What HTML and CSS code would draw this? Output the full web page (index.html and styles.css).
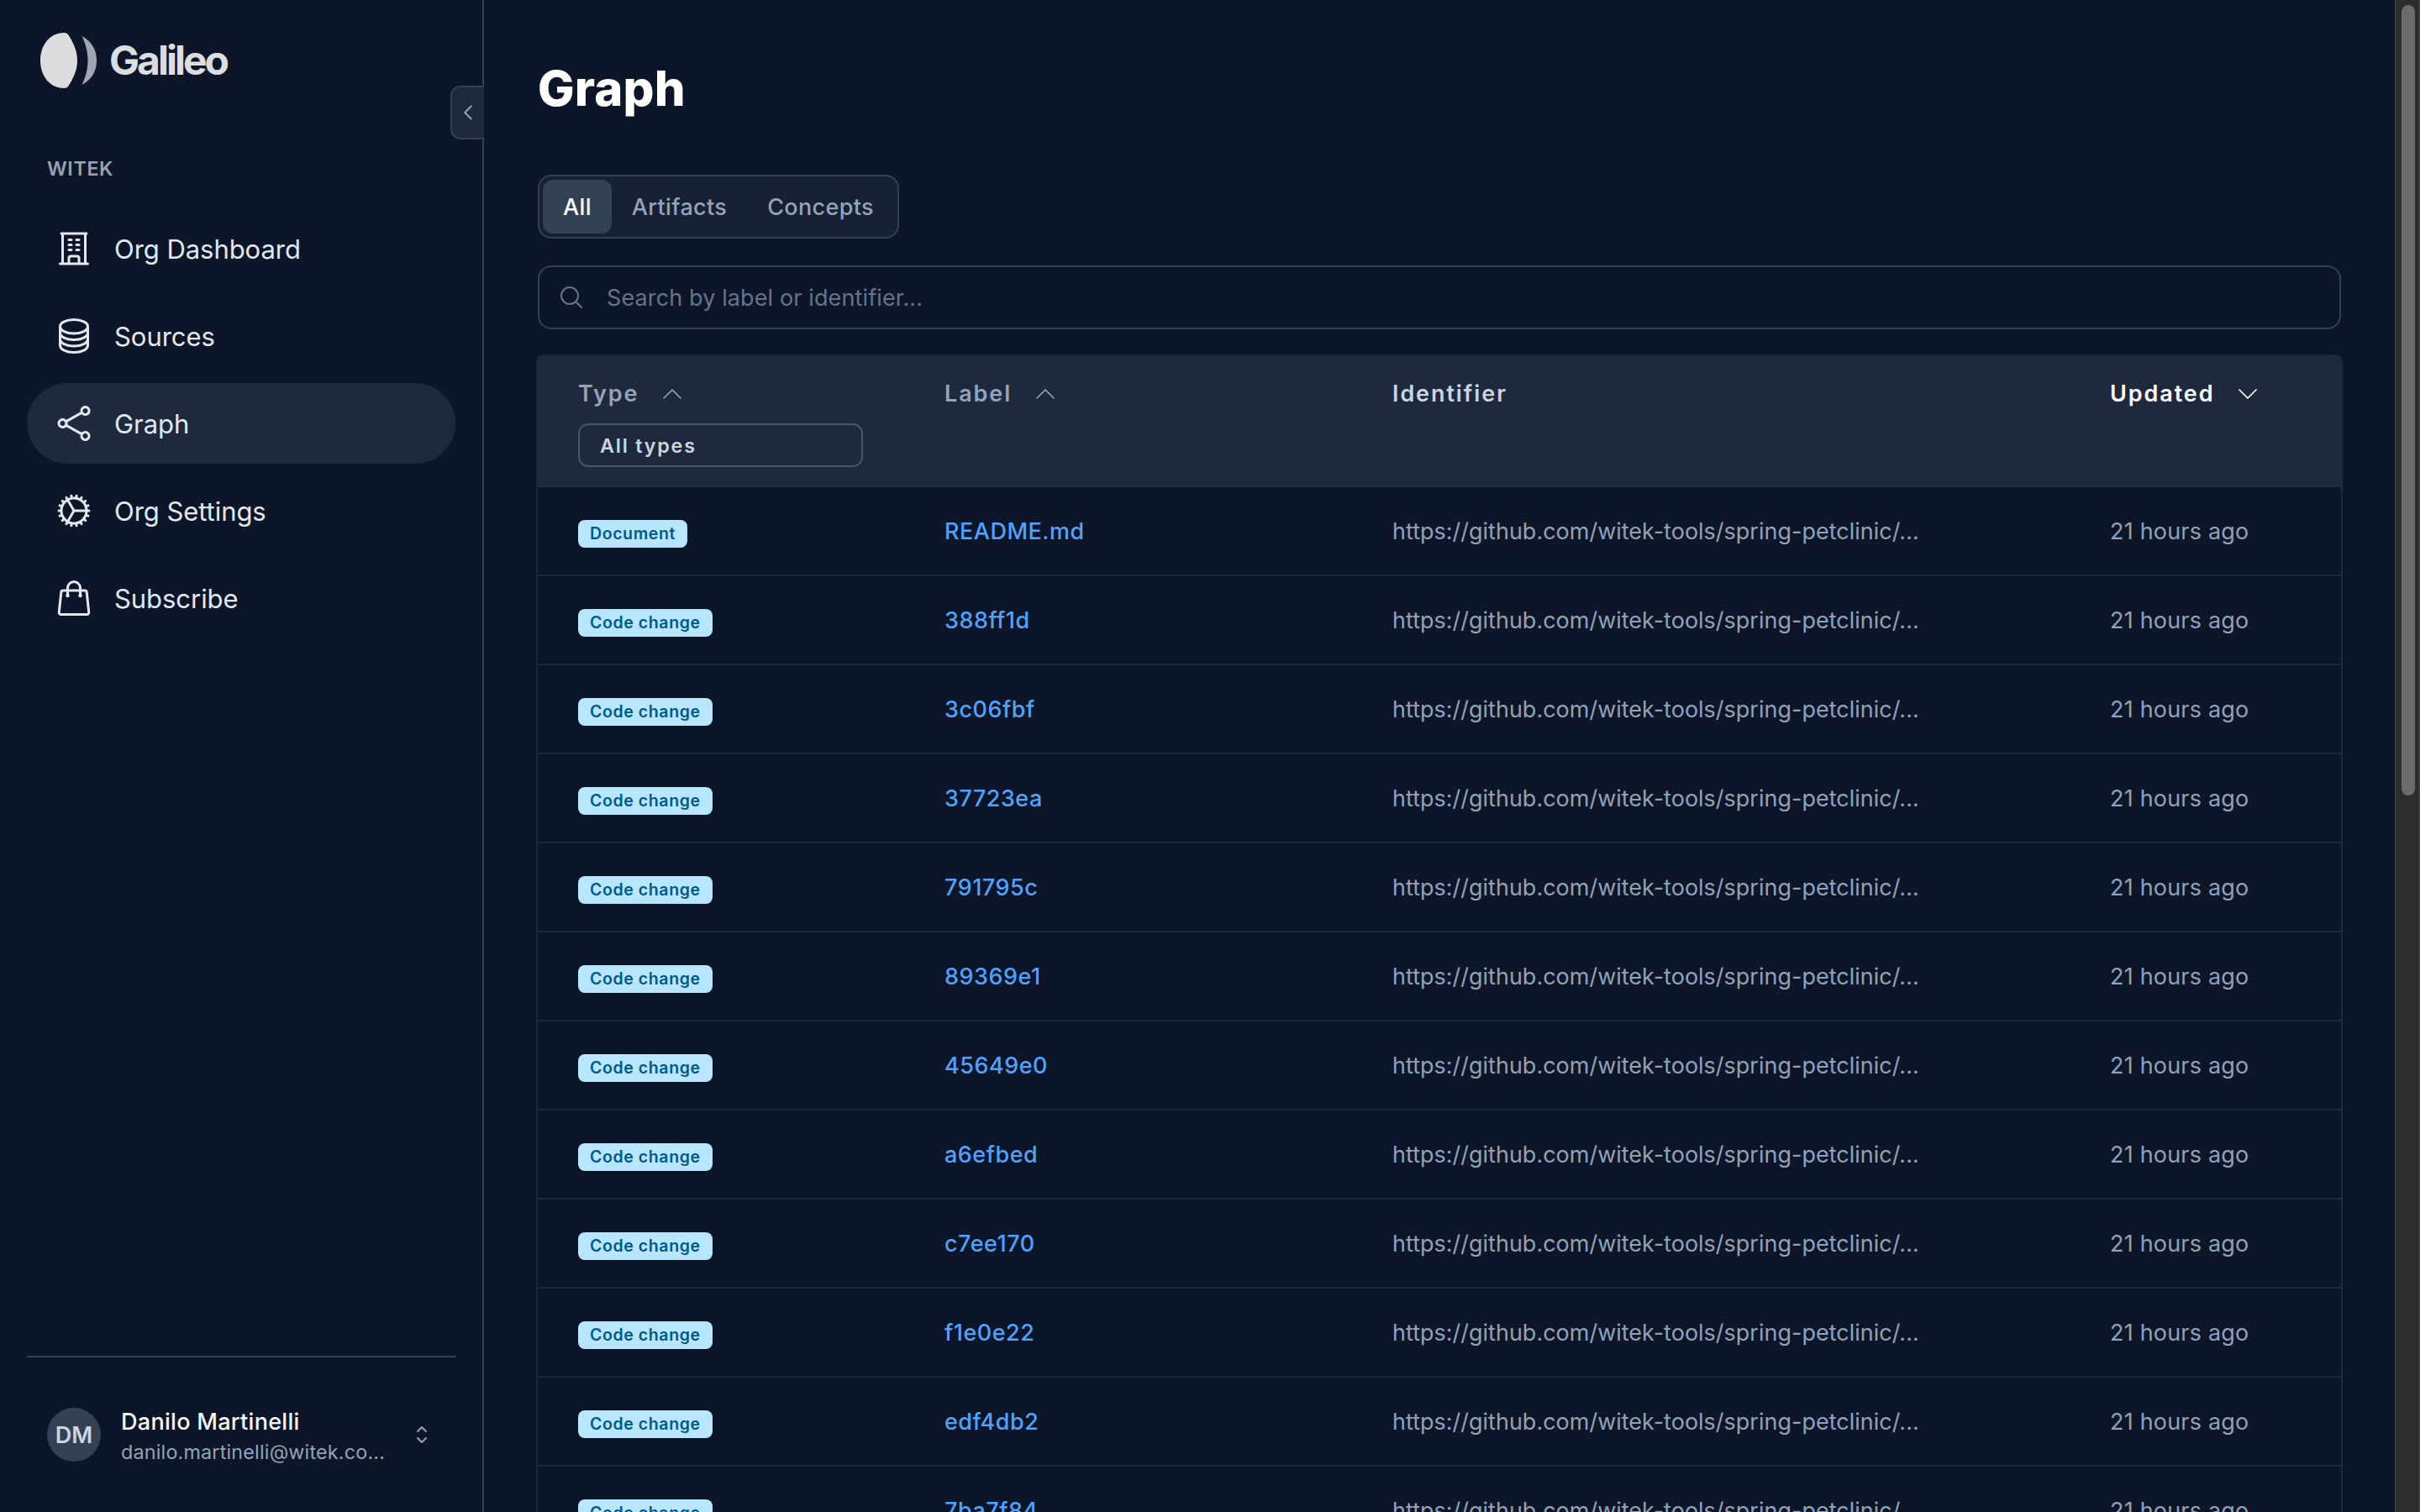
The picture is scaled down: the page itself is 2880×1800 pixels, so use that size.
FILE: index.html
```html
<!DOCTYPE html>
<html lang="en">
<head>
    <meta charset="UTF-8">
    <meta name="viewport" content="width=device-width, initial-scale=1.0">
    <title>Graph - Galileo</title>
    <link rel="stylesheet" href="styles.css">
</head>
<body>
    <div class="app">
        <aside class="sidebar">
            <div class="logo">
                <svg class="logo-mark" viewBox="0 0 68 66">
                    <path fill="#dbdddf" d="M28 0C12 0 0 14 0 33s12 33 28 33c3 0 4.500-1 6-3.500C40.500 52 44 43 44 33S40.500 14 34 3.500C32.500 1 31 0 28 0Z"/>
                    <path fill="#a0a5b4" d="M49.500 4C61 10 67 20 67 33S61 56 49.500 62C54 53 56.500 43 56.500 33S54 13 49.500 4Z"/>
                </svg>
                <span class="logo-text">Galileo</span>
            </div>
            <button class="collapse">
                <svg class="icon" viewBox="0 0 24 24"><path d="M15.750 19.500 8.250 12l7.500-7.500"/></svg>
            </button>

            <div class="org-name">WITEK</div>
            <nav class="nav">
                <a class="nav-item">
                    <svg class="icon" viewBox="0 0 24 24"><path d="M3.750 21h16.500M4.500 3h15M5.250 3v18m13.500-18v18M9 6.750h1.500m-1.500 3h1.500m-1.500 3h1.500m3-6H15m-1.500 3H15m-1.500 3H15M9 21v-3.375c0-.621.504-1.125 1.125-1.125h3.750c.621 0 1.125.504 1.125 1.125V21"/></svg>
                    <span>Org Dashboard</span>
                </a>
                <a class="nav-item">
                    <svg class="icon" viewBox="0 0 24 24"><path d="M20.250 6.375c0 2.278-3.694 4.125-8.250 4.125S3.750 8.653 3.750 6.375m16.500 0c0-2.278-3.694-4.125-8.250-4.125S3.750 4.097 3.750 6.375m16.500 0v11.250c0 2.278-3.694 4.125-8.250 4.125s-8.250-1.847-8.250-4.125V6.375m16.500 0v3.750m-16.500-3.750v3.750m16.500 0v3.750C20.250 16.153 16.556 18 12 18s-8.250-1.847-8.250-4.125v-3.750m16.500 0c0 2.278-3.694 4.125-8.250 4.125s-8.250-1.847-8.250-4.125"/></svg>
                    <span>Sources</span>
                </a>
                <a class="nav-item active">
                    <svg class="icon" viewBox="0 0 24 24"><path d="M7.217 10.907a2.250 2.250 0 1 0 0 2.186m0-2.186c.18.324.283.696.283 1.093s-.103.77-.283 1.093m0-2.186 9.566-5.314m-9.566 7.500 9.566 5.314m0 0a2.250 2.250 0 1 0 3.935 2.186 2.250 2.250 0 0 0-3.935-2.186Zm0-12.814a2.250 2.250 0 1 0 3.933-2.185 2.250 2.250 0 0 0-3.933 2.185Z"/></svg>
                    <span>Graph</span>
                </a>
                <a class="nav-item">
                    <svg class="icon" viewBox="0 0 24 24"><path d="M4.500 12a7.500 7.500 0 0 0 15 0m-15 0a7.500 7.500 0 1 1 15 0m-15 0H3m16.500 0H21m-1.500 0H12m-8.457 3.077 1.410-.513m14.095-5.130 1.410-.513M5.106 17.785l1.150-.964m11.490-9.642 1.149-.964M7.501 19.795l.75-1.300m7.500-12.990.75-1.300m-6.063 16.658.26-1.477m2.605-14.772.26-1.477m0 17.726-.26-1.477M10.698 4.614l-.26-1.477M16.500 19.794l-.75-1.299M7.500 4.205 12 12m6.894 5.785-1.149-.964M6.256 7.178l-1.150-.964m15.352 8.864-1.410-.513M4.954 9.435l-1.410-.514M12.002 12l-3.750 6.495"/></svg>
                    <span>Org Settings</span>
                </a>
                <a class="nav-item">
                    <svg class="icon" viewBox="0 0 24 24"><path d="M15.750 10.500V6a3.750 3.750 0 1 0-7.500 0v4.500m11.356-1.993 1.263 12c.07.665-.45 1.243-1.119 1.243H4.250a1.125 1.125 0 0 1-1.120-1.243l1.264-12A1.125 1.125 0 0 1 5.513 7.500h12.974c.576 0 1.059.435 1.119 1.007ZM8.625 10.500a.375.375 0 1 1-.75 0 .375.375 0 0 1 .75 0Zm7.500 0a.375.375 0 1 1-.75 0 .375.375 0 0 1 .75 0Z"/></svg>
                    <span>Subscribe</span>
                </a>
            </nav>

            <div class="user">
                <div class="avatar">DM</div>
                <div class="user-info">
                    <div class="user-name">Danilo Martinelli</div>
                    <div class="user-email">danilo.martinelli@witek.co...</div>
                </div>
                <svg class="icon" viewBox="0 0 24 24"><path d="M8.250 15 12 18.750 15.750 15m-7.500-6L12 5.250 15.750 9"/></svg>
            </div>
        </aside>

        <main class="main">
            <h1>Graph</h1>
            <div class="tabs">
                <button class="tab active">All</button>
                <button class="tab">Artifacts</button>
                <button class="tab">Concepts</button>
            </div>
            <div class="search">
                <svg class="icon" viewBox="0 0 24 24"><path d="m21 21-5.197-5.197m0 0A7.500 7.500 0 1 0 5.196 5.196a7.500 7.500 0 0 0 10.607 10.607Z"/></svg>
                <span>Search by label or identifier...</span>
            </div>

            <div class="table">
                <div class="row head">
                    <div class="cell">
                        <div class="sort">Type <svg class="icon" viewBox="0 0 24 24"><path d="m4.500 15.750 7.500-7.500 7.500 7.500"/></svg></div>
                        <div class="select">All types</div>
                    </div>
                    <div class="cell">
                        <div class="sort">Label <svg class="icon" viewBox="0 0 24 24"><path d="m4.500 15.750 7.500-7.500 7.500 7.500"/></svg></div>
                    </div>
                    <div class="cell">
                        <div class="sort plain">Identifier</div>
                    </div>
                    <div class="cell">
                        <div class="sort current">Updated <svg class="icon" viewBox="0 0 24 24"><path d="m19.500 8.250-7.500 7.500-7.500-7.500"/></svg></div>
                    </div>
                </div>
                <div id="rows"></div>
            </div>
        </main>

        <div class="scrollbar"><div class="thumb"></div></div>
    </div>

    <script>
        const labels = ["README.md", "388ff1d", "3c06fbf", "37723ea", "791795c", "89369e1",
            "45649e0", "a6efbed", "c7ee170", "f1e0e22", "edf4db2", "7ba7f84"];

        document.getElementById("rows").innerHTML = labels.map((label, i) => `
            <div class="row">
                <div class="cell"><span class="badge">${i === 0 ? "Document" : "Code change"}</span></div>
                <div class="cell"><a class="link">${label}</a></div>
                <div class="cell"><span class="url">https://github.com/witek-tools/spring-petclinic/...</span></div>
                <div class="cell"><span class="updated">21 hours ago</span></div>
            </div>`).join("");
    </script>
</body>
</html>
```
FILE: styles.css
```css
* {
    box-sizing: border-box;
}
body {
    background-color: #0d1628;
    color: #e2e8f0;
    font-family: Inter, sans-serif;
    font-size: 27px;
    margin: 0;
    overflow: hidden;
}
h1, button {
    margin: 0;
    font-family: inherit;
}
.app {
    display: flex;
    height: 1800px;
    overflow: hidden;
}
.icon {
    width: 32px;
    height: 32px;
    flex: none;
    fill: none;
    stroke: currentColor;
    stroke-width: 1.5;
    stroke-linecap: round;
    stroke-linejoin: round;
}

/* Sidebar */
.sidebar {
    position: relative;
    display: flex;
    flex-direction: column;
    width: 576px;
    flex: none;
    padding: 0 32px;
    border-right: 2px solid #334155;
}
.logo {
    display: flex;
    align-items: center;
    gap: 14px;
    height: 66px;
    margin: 39px 0 0 16px;
}
.logo-mark {
    width: 68px;
    height: 66px;
}
.logo-text {
    color: #dbdddf;
    font-size: 48px;
    font-weight: 700;
    letter-spacing: -3px;
    line-height: 66px;
}
.collapse {
    position: absolute;
    right: -2px;
    top: 102px;
    display: flex;
    align-items: center;
    justify-content: center;
    width: 40px;
    height: 64px;
    padding: 0;
    background-color: #1e293d;
    border: 2px solid #334155;
    border-right: none;
    border-radius: 12px 0 0 12px;
    color: #94a3b8;
}
.collapse .icon {
    width: 24px;
    height: 24px;
    stroke-width: 2;
}
.org-name {
    margin: 81px 0 0 24px;
    line-height: 30px;
    color: #94a3b8;
    font-size: 23.3px;
    font-weight: 600;
    letter-spacing: 0.6px;
}
.nav {
    display: flex;
    flex-direction: column;
    gap: 8px;
    margin-top: 32px;
}
.nav-item {
    display: flex;
    align-items: center;
    gap: 24px;
    height: 96px;
    padding: 0 32px;
    border-radius: 48px;
    font-size: 31px;
    letter-spacing: -0.05px;
}
.nav-item .icon {
    width: 48px;
    height: 48px;
}
.nav-item.active {
    background-color: #1e293d;
}
.user {
    display: flex;
    align-items: center;
    height: 186px;
    margin-top: auto;
    padding: 0 24px;
    border-top: 2px solid #334155;
    color: #94a3b8;
}
.avatar {
    display: flex;
    align-items: center;
    justify-content: center;
    width: 64px;
    height: 64px;
    margin-right: 24px;
    border-radius: 50%;
    background-color: #334155;
    color: #cbd5e1;
    font-weight: 600;
}
.user-info {
    flex: 1;
}
.user-name {
    color: #f8fafc;
    font-weight: 500;
    letter-spacing: 0.3px;
    line-height: 41px;
}
.user-email {
    font-size: 23.3px;
    letter-spacing: 0.2px;
    line-height: 32px;
}

/* Main column */
.main {
    flex: 1;
    padding: 64px 64px 0;
}
h1 {
    color: #ffffff;
    font-size: 58px;
    font-weight: 800;
    letter-spacing: 0.2px;
    line-height: 83px;
}
.tabs {
    display: flex;
    width: fit-content;
    height: 76px;
    margin-top: 61px;
    padding: 4px;
    border: 2px solid #334155;
    border-radius: 16px;
    background-color: #172035;
}
.tab {
    padding: 1px 24px 0;
    border: none;
    border-radius: 12px;
    background: none;
    color: #94a3b8;
    font-size: 27px;
    font-weight: 500;
    letter-spacing: 0.35px;
}
.tab.active {
    background-color: #334155;
    color: #ffffff;
}
.search {
    display: flex;
    align-items: center;
    gap: 26px;
    height: 76px;
    margin-top: 32px;
    padding: 0 22px;
    border: 2px solid #334155;
    border-radius: 16px;
    color: #64748b;
    letter-spacing: 0.12px;
}
.search span {
    padding-top: 1px;
}

/* Table */
.table {
    margin: 30px -2px 0;
    border: 2px solid #1e293d;
    border-radius: 10px 10px 0 0;
}
.row {
    display: grid;
    grid-template-columns: 436px 533px 854px 323px;
    height: 106px;
    border-bottom: 2px solid #1e293b;
}
.row.head {
    height: 156px;
    background-color: #1e293d;
}
.cell {
    padding: 32px 48px 0;
    line-height: 41px;
}
.head .cell {
    padding-top: 24px;
}
.sort {
    display: flex;
    align-items: center;
    gap: 24px;
    color: #94a3b8;
    font-weight: 600;
    letter-spacing: 1.9px;
}
.sort.plain {
    color: #cbd5e1;
}
.sort.current {
    color: #ffffff;
}
.sort .icon {
    stroke-width: 1.3;
}
.select {
    width: 339px;
    height: 52px;
    margin-top: 15px;
    padding: 1px 24px 0;
    border: 2px solid #475569;
    border-radius: 12px;
    color: #cbd5e1;
    font-size: 23.3px;
    font-weight: 600;
    letter-spacing: 1.8px;
    line-height: 48px;
}
.badge {
    display: block;
    width: fit-content;
    height: 33px;
    margin-top: 7px;
    padding: 0 14px;
    border-radius: 8px;
    background-color: #b8e6fe;
    color: #00598a;
    font-size: 19.5px;
    font-weight: 600;
    letter-spacing: 0.6px;
    line-height: 33px;
}
.link {
    color: #51a2ff;
    font-weight: 500;
    letter-spacing: 0.5px;
}
.url, .updated {
    color: #90a1b9;
}
.updated {
    letter-spacing: 0.2px;
}

/* Window scrollbar */
.scrollbar {
    width: 30px;
    padding: 6px 4px 0 6px;
    border-left: 2px solid #3b3b3b;
    border-right: 2px solid #3b3b3b;
    background-color: #2c2c2c;
}
.thumb {
    width: 16px;
    height: 941px;
    border-radius: 8px;
    background-color: #6b6b6b;
}
```
